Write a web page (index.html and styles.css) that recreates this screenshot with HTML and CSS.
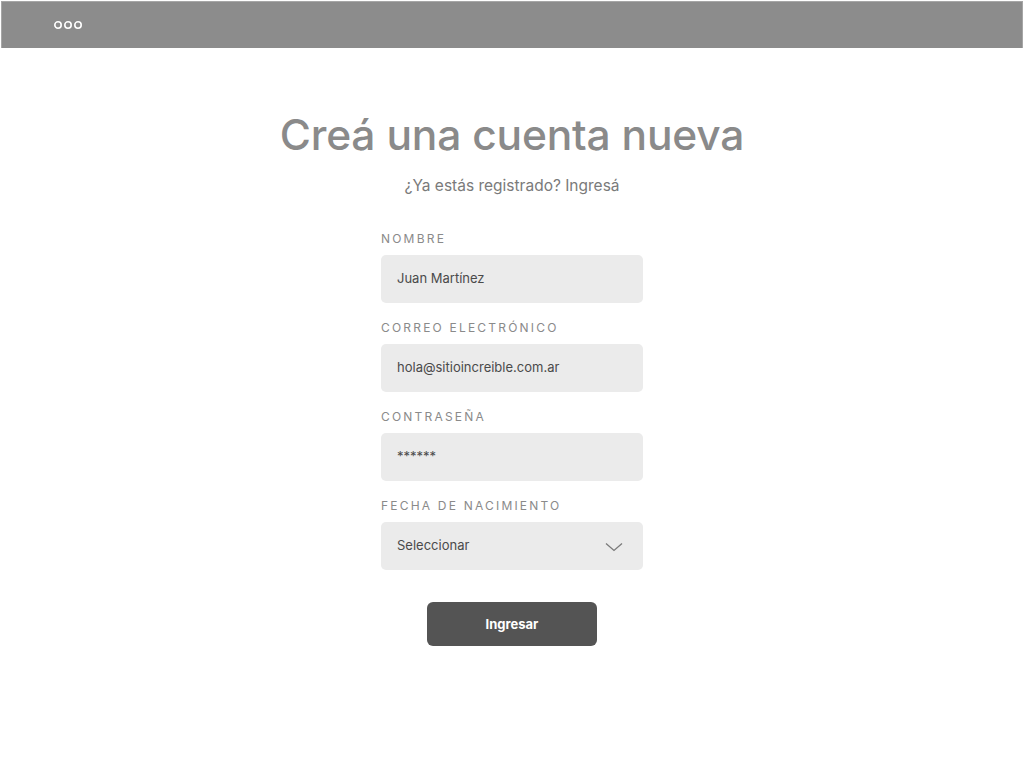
FILE: index.html
```html
<!DOCTYPE html>
<html lang="es">
<head>
<meta charset="utf-8">
<title>Creá una cuenta nueva</title>
<link rel="stylesheet" href="styles.css">
</head>
<body>
<header class="topbar">
  <svg class="dots" width="30" height="10" viewBox="0 0 30 10" aria-hidden="true">
    <circle cx="4" cy="5" r="3.2" fill="none" stroke="#fff" stroke-width="1.6"/>
    <circle cx="14" cy="5" r="3.2" fill="none" stroke="#fff" stroke-width="1.6"/>
    <circle cx="24" cy="5" r="3.2" fill="none" stroke="#fff" stroke-width="1.6"/>
  </svg>
</header>
<main class="page">
  <h1 class="title">Creá una cuenta nueva</h1>
  <p class="subtitle">¿Ya estás registrado? Ingresá</p>
  <form class="form">
    <div class="field">
      <label class="label">NOMBRE</label>
      <div class="input">Juan Martínez</div>
    </div>
    <div class="field">
      <label class="label">CORREO ELECTRÓNICO</label>
      <div class="input">hola@sitioincreible.com.ar</div>
    </div>
    <div class="field">
      <label class="label">CONTRASEÑA</label>
      <div class="input">******</div>
    </div>
    <div class="field">
      <label class="label">FECHA DE NACIMIENTO</label>
      <div class="input select">
        <span>Seleccionar</span>
        <svg class="chev" width="18" height="10" viewBox="0 0 18 10" aria-hidden="true">
          <path d="M1 1.5 L9 8.5 L17 1.5" fill="none" stroke="#7a7a7a" stroke-width="1.3"/>
        </svg>
      </div>
    </div>
    <button type="button" class="btn">Ingresar</button>
  </form>
</main>
</body>
</html>
```

FILE: styles.css
```css
* { box-sizing: border-box; }
html, body { margin: 0; padding: 0; background: #fff; }
body { font-family: Inter, "Noto Sans", sans-serif; }

.topbar {
  margin: 1px 1px 0 1px;
  height: 47px;
  background: #8c8c8c;
  border: 1px solid #a6a6a6;
  border-bottom: none;
  display: flex;
  align-items: center;
  padding-left: 52px;
}
.dots { display: block; margin-top: -1px; }

.page {
  display: flex;
  flex-direction: column;
  align-items: center;
}

.title {
  margin: 63px 0 0;
  font-size: 42.5px;
  line-height: 48px;
  font-weight: 500;
  color: #8a8a8a;
  letter-spacing: -0.2px;
}

.subtitle {
  margin: 17px 0 0;
  font-size: 15.5px;
  line-height: 20px;
  color: #7a7a7a;
}

.form {
  width: 262px;
  margin-top: 35px;
  display: flex;
  flex-direction: column;
}

.field {
  display: flex;
  flex-direction: column;
  margin-bottom: 17px;
}

.label {
  font-size: 12px;
  line-height: 16px;
  letter-spacing: 2.2px;
  color: #8a8a8a;
  margin-bottom: 8px;
}

.input {
  height: 48px;
  background: #ebebeb;
  border-radius: 5px;
  padding: 0 16px;
  font-size: 13px;
  color: #4a4a4a;
  display: flex;
  align-items: center;
  padding-bottom: 2px;
}

.select { justify-content: space-between; }
.chev { margin-right: 4px; margin-top: 4px; }

.btn {
  align-self: center;
  margin-top: 15px;
  width: 170px;
  height: 44px;
  border: none;
  border-radius: 6px;
  background: #545454;
  color: #fff;
  font-family: Inter, "Noto Sans", sans-serif;
  font-weight: 700;
  font-size: 13px;
  padding-bottom: 2px;
}
```
